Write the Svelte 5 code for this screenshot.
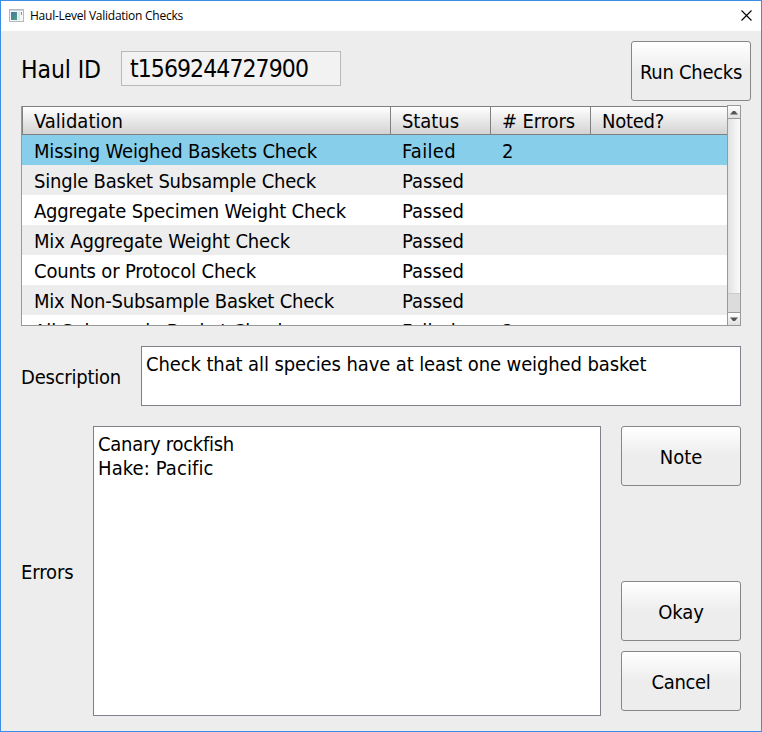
<script>
  const checks = [
    { name: 'Missing Weighed Baskets Check', w: 283, status: 'Failed', errors: '2' },
    { name: 'Single Basket Subsample Check', w: 282, status: 'Passed', errors: '' },
    { name: 'Aggregate Specimen Weight Check', w: 312, status: 'Passed', errors: '' },
    { name: 'Mix Aggregate Weight Check', w: 256, status: 'Passed', errors: '' },
    { name: 'Counts or Protocol Check', w: 222, status: 'Passed', errors: '' },
    { name: 'Mix Non-Subsample Basket Check', w: 300, status: 'Passed', errors: '' },
    { name: 'All Subsample Basket Check', w: 254, status: 'Failed', errors: '2' }
  ];
  let selected = $state(0);

  // Spreads the letters of a label so that it takes the given width.
  function fit(node, width) {
    const n = node.textContent.length;
    const natural = node.getBoundingClientRect().width;
    node.style.letterSpacing = `${((width - natural) / n).toFixed(3)}px`;
  }
</script>

<div class="window">
  <header class="titlebar">
    <svg class="appicon" width="15" height="13" viewBox="0 0 15 13">
      <defs>
        <linearGradient id="pane" x1="0" y1="0" x2="1" y2="1">
          <stop offset="0" stop-color="#4878a8" />
          <stop offset="1" stop-color="#48a078" />
        </linearGradient>
      </defs>
      <rect x="0.5" y="0.5" width="14" height="12" fill="#f4f6f7" stroke="#b4babf" />
      <rect x="1" y="1" width="13" height="1" fill="#cfd5da" />
      <rect x="2" y="3" width="6" height="8" fill="url(#pane)" />
      <rect x="9" y="3" width="2" height="8" fill="#dfe5ea" />
      <rect x="12" y="3" width="1" height="3" fill="#5fa890" />
    </svg>
    <span class="title"><span use:fit={153}>Haul-Level Validation Checks</span></span>
    <svg class="close" width="11" height="11" viewBox="0 0 11 11">
      <path d="M0.5 0.5L10.5 10.5M10.5 0.5L0.5 10.5" stroke="#000" stroke-width="1.1" />
    </svg>
  </header>

  <main>
    <section class="haul">
      <span class="big haul-label"><span use:fit={80}>Haul ID</span></span>
      <div class="field big"><span use:fit={178}>t1569244727900</span></div>
      <button class="run"><span use:fit={102}>Run Checks</span></button>
    </section>

    <section class="table">
      <div class="grid">
        <div class="row head">
          <div class="c1"><span use:fit={89}>Validation</span></div>
          <div class="c2"><span use:fit={57}>Status</span></div>
          <div class="c3"><span use:fit={73}># Errors</span></div>
          <div class="c4"><span use:fit={62}>Noted?</span></div>
        </div>
        {#each checks as check, i}
          <!-- svelte-ignore a11y_click_events_have_key_events, a11y_no_static_element_interactions -->
          <div class="row item" class:alt={i % 2 === 1} class:selected={selected === i} onclick={() => (selected = i)}>
            <div class="c1"><span use:fit={check.w}>{check.name}</span></div>
            <div class="c2"><span use:fit={check.status === 'Failed' ? 54 : 62}>{check.status}</span></div>
            <div class="c3">{check.errors}</div>
            <div class="c4"></div>
          </div>
        {/each}
      </div>
      <div class="scroll">
        <div class="arrow"><svg width="8" height="5" viewBox="0 0 8 5"><path d="M0 4.5L3 1h2l3 3.5z" fill="#555" /></svg></div>
        <div class="thumb"></div>
        <div class="track"></div>
        <div class="arrow down"><svg width="8" height="5" viewBox="0 0 8 5"><path d="M0 0.5h8L5 4H3z" fill="#555" /></svg></div>
      </div>
    </section>

    <section class="description">
      <span class="label"><span use:fit={100}>Description</span></span>
      <div class="area"><span use:fit={500.5}>Check that all species have at least one weighed basket</span></div>
    </section>

    <section class="errors">
      <span class="label"><span use:fit={52.5}>Errors</span></span>
      <div class="area">
        <div><span use:fit={136}>Canary rockfish</span></div>
        <div><span use:fit={115.5}>Hake: Pacific</span></div>
      </div>
      <div class="actions">
        <button><span use:fit={42.5}>Note</span></button>
        <button class="okay"><span use:fit={45.5}>Okay</span></button>
        <button><span use:fit={59}>Cancel</span></button>
      </div>
    </section>
  </main>
</div>

<style>
  .window {
    box-sizing: border-box;
    width: 762px;
    height: 732px;
    border: 1px solid #3a8ee6;
    background: #ededed;
    color: #000;
    font: 20px/24px "DejaVu Sans Condensed", "DejaVu Sans", sans-serif;
    font-stretch: condensed;
    overflow: hidden;
    white-space: nowrap;
  }
  .titlebar {
    display: flex;
    align-items: center;
    height: 30px;
    box-sizing: border-box;
    padding: 0 9px 2px 8px;
    background: #fff;
  }
  .title {
    flex: 1;
    margin-left: 6px;
    padding-top: 2px;
    font: 12px/16px "Open Sans", "Noto Sans", sans-serif;
  }
  .close { margin-right: 0; }
  main { padding: 10px 20px 0; }
  .haul { display: flex; height: 60px; margin-right: -10px; }
  .big { font-size: 24.5px; line-height: 33px; }
  .haul-label { width: 100px; padding-top: 12px; }
  .field {
    box-sizing: border-box;
    width: 220px;
    height: 35px;
    margin-top: 10px;
    padding-left: 8px;
    border: 1px solid #b9b9b9;
    background: #f2f2f2;
  }
  button {
    box-sizing: border-box;
    display: block;
    width: 120px;
    height: 60px;
    padding: 2px 0 0;
    border: 1px solid #868686;
    border-radius: 3px;
    background: linear-gradient(#fff, #ededed 50%);
    color: #000;
    font: inherit;
    text-align: center;
  }
  .run { margin-left: auto; }
  .table {
    box-sizing: border-box;
    display: flex;
    height: 221px;
    margin-top: 4px;
  }
  .grid {
    box-sizing: border-box;
    flex: 1;
    height: 220px;
    margin-top: 1px;
    border: 1px solid #999;
    border-width: 0 0 1px 1px;
    background: #fff;
    overflow: hidden;
  }
  .row { display: flex; height: 30px; line-height: 30px; }
  .row > div { box-sizing: border-box; padding: 1px 0 0 11px; }
  .item > div { padding-left: 12px; }
  .c1 { width: 368px; }
  .c2, .c3 { width: 100px; }
  .c4 { flex: 1; }
  .alt { background: #ededed; }
  .selected { background: #87ceeb; }
  .head {
    box-sizing: border-box;
    height: 29px;
    line-height: 27px;
    border: 1px solid #808080;
    border-width: 1px 0;
    background: linear-gradient(#fff, #d3d3d3);
  }
  .head > div { border-left: 1px solid #808080; }
  .scroll {
    box-sizing: border-box;
    display: flex;
    flex-direction: column;
    width: 14px;
    height: 221px;
    border: 1px solid #999;
    background: #ddd;
  }
  .arrow {
    box-sizing: border-box;
    display: flex;
    align-items: center;
    justify-content: center;
    height: 13px;
    border-bottom: 1px solid #999;
    background: linear-gradient(#fff, #e0e0e0);
  }
  .down { border: 0; border-top: 1px solid #999; }
  .thumb {
    box-sizing: border-box;
    height: 175px;
    border: 1px solid #ccc;
    border-width: 0 0 1px;
    background: linear-gradient(90deg, #e2e2e2, #fbfbfb);
  }
  .track { flex: 1; background: #dcdcdc; }
  .description {
    display: flex;
    align-items: center;
    height: 60px;
    margin-top: 20px;
  }
  .label { padding-top: 2px; }
  .description .label { width: 120px; }
  .area {
    box-sizing: border-box;
    height: 100%;
    padding: 5px 4px;
    border: 1px solid #7f828b;
    background: #fff;
  }
  .description .area { flex: 1; }
  .errors {
    display: flex;
    align-items: center;
    height: 290px;
    margin-top: 20px;
  }
  .errors .label { width: 72px; }
  .errors .area { width: 508px; }
  .actions {
    display: flex;
    flex-direction: column;
    gap: 10px;
    height: 100%;
    box-sizing: border-box;
    padding-bottom: 5px;
    margin-left: 20px;
  }
  .okay { margin-top: auto; }
</style>
